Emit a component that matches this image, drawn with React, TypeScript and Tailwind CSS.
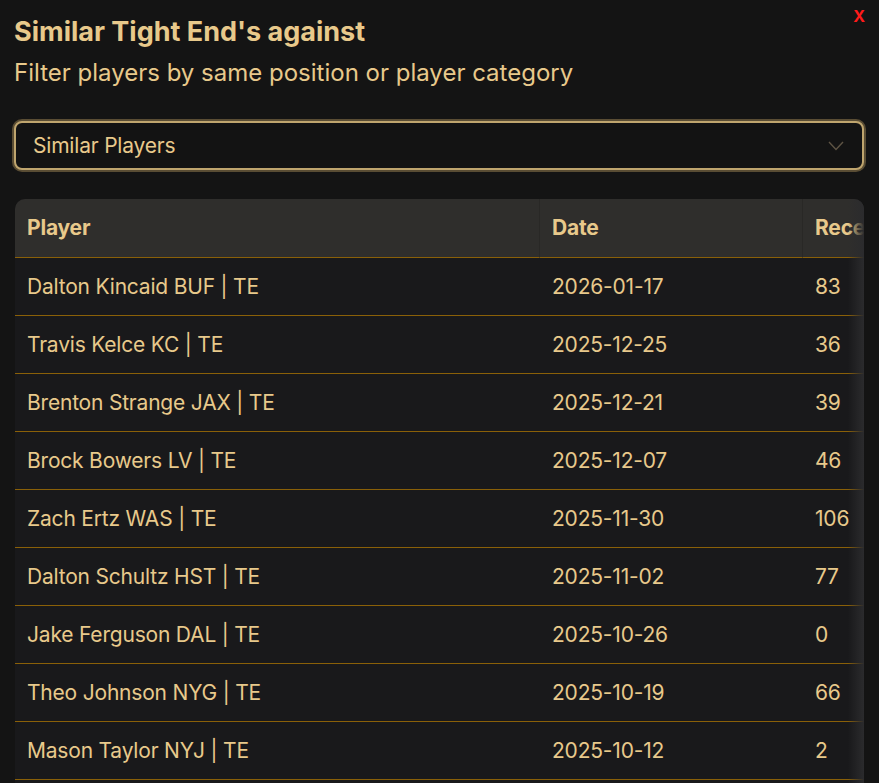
import React from "react";

type Row = { player: string; team: string; date: string; rec: string };

const rows: Row[] = [
  { player: "Dalton Kincaid", team: "BUF", date: "2026-01-17", rec: "83" },
  { player: "Travis Kelce", team: "KC", date: "2025-12-25", rec: "36" },
  { player: "Brenton Strange", team: "JAX", date: "2025-12-21", rec: "39" },
  { player: "Brock Bowers", team: "LV", date: "2025-12-07", rec: "46" },
  { player: "Zach Ertz", team: "WAS", date: "2025-11-30", rec: "106" },
  { player: "Dalton Schultz", team: "HST", date: "2025-11-02", rec: "77" },
  { player: "Jake Ferguson", team: "DAL", date: "2025-10-26", rec: "0" },
  { player: "Theo Johnson", team: "NYG", date: "2025-10-19", rec: "66" },
  { player: "Mason Taylor", team: "NYJ", date: "2025-10-12", rec: "2" },
  { player: "Tucker Kraft", team: "GB", date: "2025-10-05", rec: "51" },
];

export default function App() {
  return (
    <div
      className="relative h-[783px] w-full overflow-hidden bg-[#141414] pl-[14px] pr-[15px] text-[#e8c98b]"
      style={{ fontFamily: "Inter, 'Noto Sans', sans-serif" }}
    >
      <button
        type="button"
        className="absolute right-[14px] top-[8px] text-[16px] font-bold leading-none text-[#ff1a1a]"
      >
        X
      </button>

      <h2 className="pt-[16px] text-[27px] font-bold leading-[32px]">Similar Tight End's against</h2>
      <p className="mt-[9px] text-[24px] leading-[32px]">
        Filter players by same position or player category
      </p>

      <div className="mt-[32px] flex h-[49px] items-center justify-between rounded-[8px] border-2 border-[#bfa56e] bg-[#131313] pl-[17px] pr-[18px] shadow-[0_0_0_2px_#5a4d34]">
        <span className="text-[21px] tracking-[-0.2px]">Similar Players</span>
        <svg width="16" height="10" viewBox="0 0 16 10" fill="none" stroke="#5e5444" strokeWidth="1.4">
          <path d="M1 1l7 7.5L15 1" />
        </svg>
      </div>

      <div className="relative mt-[29px] ml-[1px] overflow-hidden rounded-t-[10px] bg-[#19191b]">
        <table className="w-[1100px] table-fixed border-separate border-spacing-0 text-left text-[21px] tracking-[-0.2px]">
          <colgroup>
            <col className="w-[525px]" />
            <col className="w-[263px]" />
            <col className="w-[160px]" />
            <col className="w-[152px]" />
          </colgroup>
          <thead>
            <tr className="h-[59px] bg-[#2f2e2c]">
              <th className="border-b border-r border-b-[#8a6008] border-r-[#292826] pl-[12px] font-bold">Player</th>
              <th className="border-b border-r border-b-[#8a6008] border-r-[#292826] pl-[12px] font-bold">Date</th>
              <th className="border-b border-r border-b-[#8a6008] border-r-[#292826] pl-[12px] font-bold">Receiving Yds</th>
              <th className="border-b border-b-[#8a6008] pl-[12px] font-bold">Targets</th>
            </tr>
          </thead>
          <tbody>
            {rows.map((r) => (
              <tr key={r.player} className="h-[58px]">
                <td className="border-b border-[#8a6008] pl-[12px]">
                  {r.player} {r.team} | TE
                </td>
                <td className="border-b border-[#8a6008] pl-[12px]">{r.date}</td>
                <td className="border-b border-[#8a6008] pl-[12px]">{r.rec}</td>
                <td className="border-b border-[#8a6008] pl-[12px]">—</td>
              </tr>
            ))}
          </tbody>
        </table>
        <div className="pointer-events-none absolute inset-y-0 right-0 w-[16px] bg-gradient-to-r from-transparent to-[#2b2b2d]" />
      </div>
    </div>
  );
}
